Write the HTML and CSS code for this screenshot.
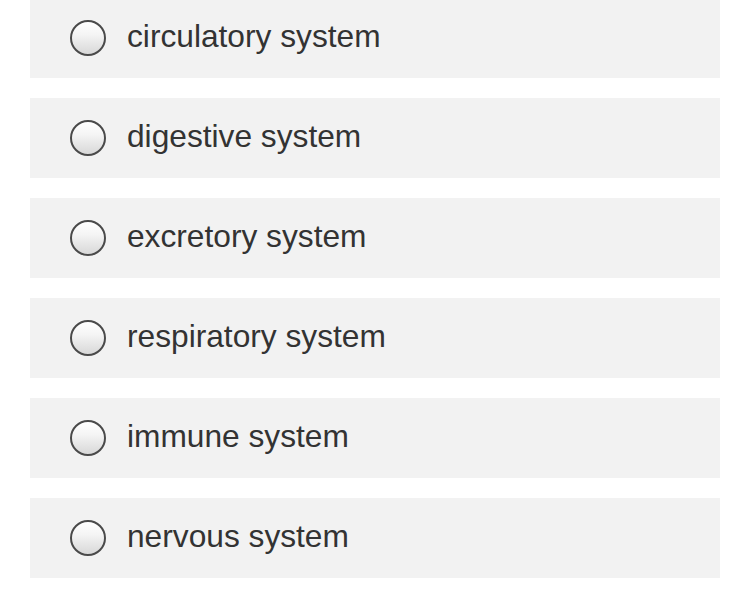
FILE: index.html
```html
<!DOCTYPE html>
<html>
<head>
<meta charset="utf-8">
<link rel="stylesheet" href="styles.css">
</head>
<body>
<div class="options">
  <label class="option"><span class="radio"></span><span class="label">circulatory system</span></label>
  <label class="option"><span class="radio"></span><span class="label">digestive system</span></label>
  <label class="option"><span class="radio"></span><span class="label">excretory system</span></label>
  <label class="option"><span class="radio"></span><span class="label">respiratory system</span></label>
  <label class="option"><span class="radio"></span><span class="label">immune system</span></label>
  <label class="option"><span class="radio"></span><span class="label">nervous system</span></label>
</div>
</body>
</html>
```
FILE: styles.css
```css
html, body {
  margin: 0;
  padding: 0;
  background: #ffffff;
}
body {
  font-family: "Liberation Sans", Arial, sans-serif;
  color: #333333;
}
.options {
  display: flex;
  flex-direction: column;
  gap: 20px;
  margin: -2px 30px 0 30px;
}
.option {
  display: flex;
  align-items: center;
  height: 80px;
  padding-left: 40px;
  background: #f2f2f2;
}
.radio {
  width: 36px;
  height: 36px;
  box-sizing: border-box;
  border: 2px solid #4a4a4a;
  border-radius: 50%;
  background: linear-gradient(to bottom, #ffffff 0%, #f4f4f4 40%, #d8d8d8 100%);
  flex: none;
}
.label {
  margin-left: 21px;
  margin-bottom: 2px;
  font-size: 31.7px;
  line-height: 1;
}
```
